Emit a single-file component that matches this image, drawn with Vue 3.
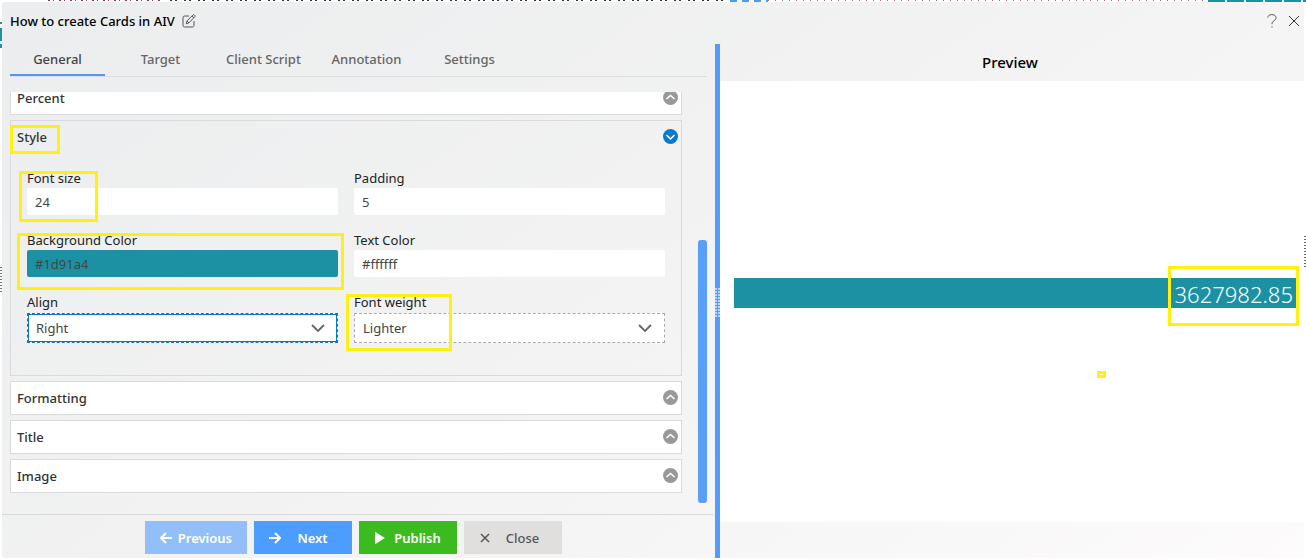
<script setup>
import { ref } from 'vue'

const tabs = ['General', 'Target', 'Client Script', 'Annotation', 'Settings']
const active = ref('General')
const fontSize = ref('24')
const padding = ref('5')
const background = ref('#1d91a4')
const textColor = ref('#ffffff')
const align = ref('Right')
const weight = ref('Lighter')
const closedPanels = ['Formatting', 'Title', 'Image']
</script>

<template>
  <div class="page">
    <div class="backdrop" aria-hidden="true">
      <i class="code-a"></i><i class="code-b"></i><i class="code-c"></i><i class="code-d"></i><i class="code-e"></i>
      <i class="edge-a"></i><i class="edge-b"></i><i class="edge-c"></i>
    </div>
    <div class="dialog">
      <header class="titlebar">
        <h1>How to create Cards in AIV</h1>
        <button class="plain" aria-label="Rename">
          <svg width="14" height="14" viewBox="0 0 14 14" fill="none" stroke="#555" stroke-width="1">
            <path d="M7 2H2.6Q1 2 1 3.6v7.8Q1 13 2.6 13h7.8q1.600 0 1.600-1.600V7" />
            <path d="M4.300 9.800l.7-2.900L11 .9q.6-.5 1.200 0l.6.6q.5.6 0 1.200L6.900 8.900zM10 2l1.900 1.900M5 7l1.900 1.900" />
          </svg>
        </button>
        <span class="grow"></span>
        <button class="plain" aria-label="Help">
          <svg width="10" height="14" viewBox="0 0 10 14" fill="none" stroke="#555" stroke-width="1">
            <path d="M.8 3.500C1 1.600 2.600.6 4.800.6c2.500 0 4.200 1.100 4.200 3.100 0 1.500-.8 2.200-2.100 3.100C5.500 7.800 5 8.400 5 10.200M5 12.300v1.300" />
          </svg>
        </button>
        <button class="plain" aria-label="Close dialog">
          <svg width="12" height="12" viewBox="0 0 12 12" fill="none" stroke="#333" stroke-width="1"><path d="M1 1l10 10M11 1L1 11" /></svg>
        </button>
      </header>

      <div class="body">
        <section class="editor">
          <nav class="tabs" role="tablist">
            <button v-for="t in tabs" :key="t" role="tab" :aria-selected="t === active" :class="{ on: t === active }" @click="active = t">{{ t }}</button>
          </nav>

          <div class="scroller">
            <div class="view">
              <div class="stack">
                <section class="panel">
                  <button class="head"><span>Percent</span>
                    <svg class="toggle" viewBox="0 0 15 15"><circle cx="7.5" cy="7.5" r="7.5" /><path d="M3.500 9l4-3.500 4 3.500" /></svg>
                  </button>
                </section>
                <section class="panel open">
                  <button class="head"><span>Style</span>
                    <svg class="toggle" viewBox="0 0 15 15"><circle cx="7.5" cy="7.5" r="7.5" /><path d="M3.500 6l4 4 4-4" /></svg>
                    <i class="mark mark-style"></i>
                  </button>
                  <div class="fields">
                    <div class="field">
                      <label for="fs">Font size</label>
                      <input id="fs" v-model="fontSize" type="text" />
                      <i class="mark mark-size"></i>
                    </div>
                    <div class="field">
                      <label for="pd">Padding</label>
                      <input id="pd" v-model="padding" type="text" />
                    </div>
                    <div class="field">
                      <label for="bg">Background Color</label>
                      <input id="bg" v-model="background" class="teal" type="text" />
                      <i class="mark mark-bg"></i>
                    </div>
                    <div class="field">
                      <label for="tc">Text Color</label>
                      <input id="tc" v-model="textColor" type="text" />
                    </div>
                    <div class="field">
                      <label for="al">Align</label>
                      <div class="drop focus">
                        <select id="al" v-model="align"><option>Left</option><option>Center</option><option>Right</option></select>
                        <svg viewBox="0 0 16 10"><path d="M2 2l6 6 6-6" /></svg>
                      </div>
                    </div>
                    <div class="field">
                      <label for="fw">Font weight</label>
                      <div class="drop">
                        <select id="fw" v-model="weight"><option>Lighter</option><option>Normal</option><option>Bold</option></select>
                        <svg viewBox="0 0 16 10"><path d="M2 2l6 6 6-6" /></svg>
                      </div>
                      <i class="mark mark-weight"></i>
                    </div>
                  </div>
                </section>
                <section v-for="p in closedPanels" :key="p" class="panel">
                  <button class="head"><span>{{ p }}</span>
                    <svg class="toggle" viewBox="0 0 15 15"><circle cx="7.5" cy="7.5" r="7.5" /><path d="M3.500 9l4-3.500 4 3.500" /></svg>
                  </button>
                </section>
              </div>
            </div>
            <div class="track"><div class="thumb"></div></div>
          </div>

          <footer class="actions">
            <button class="act prev">
              <svg width="12" height="12" viewBox="0 0 12 12"><path d="M12 6H1.500M6 1L1 6l5 5" /></svg><span>Previous</span>
            </button>
            <button class="act next">
              <svg width="12" height="12" viewBox="0 0 12 12"><path d="M0 6h10.500M6 1l5 5-5 5" /></svg><span>Next</span>
            </button>
            <button class="act publish">
              <svg width="12" height="12" viewBox="0 0 12 12"><path class="solid" d="M2 1.500v9l7-4.500z" /></svg><span>Publish</span>
            </button>
            <button class="act close">
              <svg width="12" height="12" viewBox="0 0 12 12"><path d="M2 2l8 8M10 2l-8 8" /></svg><span>Close</span>
            </button>
          </footer>
        </section>

        <div class="splitter" role="separator"><i class="grip"></i></div>

        <section class="preview">
          <h2>Preview</h2>
          <div class="canvas">
            <div class="card">3627982.85<i class="mark mark-value"></i></div>
            <i class="mark speck"></i>
          </div>
          <div class="foot"></div>
        </section>
      </div>
    </div>
  </div>
</template>

<style>
body { margin: 0; overflow: hidden; }
</style>

<style scoped>
* { box-sizing: border-box; }
.page {
  position: relative;
  height: 100vh;
  padding: 2px;
  background: #fff;
  color: #333;
  font: 13px/18px "Noto Sans", "Open Sans", sans-serif;
}
button, input, select { font: inherit; color: inherit; margin: 0; }
button { border: 0; background: none; padding: 0; cursor: pointer; }
h1, h2 { margin: 0; }

.backdrop i { position: absolute; top: 0; height: 1px; }
.backdrop .code-a { left: 48px; width: 115px; background: repeating-linear-gradient(90deg, #8a3654 0 2px, #fff 2px 5px, #8a3654 5px 6px, #fff 6px 11px); }
.backdrop .code-b { left: 170px; width: 554px; background: repeating-linear-gradient(90deg, #333 0 2px, #fff 2px 5px, #333 5px 7px, #fff 7px 14px); }
.backdrop .code-c { left: 730px; width: 38px; height: 2px; background: repeating-linear-gradient(90deg, #4b9bf0 0 7px, #fff 7px 12px); }
.backdrop .code-d { left: 768px; width: 436px; background: repeating-linear-gradient(90deg, #a66c7f 0 1px, #fff 1px 7px); }
.backdrop .code-e { left: 1208px; width: 98px; height: 2px; background: repeating-linear-gradient(90deg, #1d91a4 0 17px, #fff 17px 19px); }
.backdrop .edge-a { left: 0; top: 22px; width: 2px; height: 26px; background: linear-gradient(#1d91a4 0 2px, #fff 2px 6px, #1d91a4 6px 19px, #fff 19px 22px, #1d91a4 22px); }
.backdrop .edge-b { left: 0; top: 267px; width: 2px; height: 25px; background: repeating-linear-gradient(#777 0 1px, #fff 1px 3px); }
.backdrop .edge-c { right: 0; top: 236px; width: 2px; height: 31px; background: repeating-linear-gradient(#666 0 1px, #fff 1px 3px); }

.dialog {
  position: relative;
  display: flex;
  flex-direction: column;
  height: 100%;
  border-radius: 3px;
  background: linear-gradient(145deg, #ebedee 0%, #f2f2f2 45%, #f5f5f5 65%, #fdfbfb 100%);
}
.titlebar { display: flex; align-items: center; height: 42px; padding: 0 4px 5px 8px; }
h1 { font-size: 13px; line-height: 18px; font-weight: 500; color: #000; }
.plain { display: flex; margin-left: 7px; }
.plain + .plain { margin-left: 11px; }
.grow { flex: 1; }

.body { flex: 1; display: flex; min-height: 0; }
.editor { flex: 713 1 0; display: flex; flex-direction: column; min-width: 0; }
.tabs { display: flex; gap: 8px; margin: 0 8px; height: 33px; border-bottom: 1px solid #dcdfe0; flex: none; }
.tabs button { width: 95px; height: 32px; color: #666; font-weight: 500; border-bottom: 2px solid transparent; }
.tabs .on { color: #444; border-color: #5596ee; }

.scroller { flex: 1; display: flex; min-height: 0; margin-top: 15px; padding: 0 8px; }
.view { flex: 1; overflow: hidden; display: flex; flex-direction: column; justify-content: flex-end; padding-bottom: 21px; }
.stack { display: flex; flex-direction: column; gap: 5px; }
.track { width: 25px; display: flex; justify-content: flex-end; align-items: flex-end; padding-bottom: 11px; }
.thumb { width: 9px; height: 263px; border-radius: 3px; background: #5a9efb; }

.panel { border: 1px solid #dadada; background: #fff; }
.panel.open { background: none; }
.head { position: relative; display: flex; justify-content: space-between; align-items: center; width: 100%; height: 32px; padding: 0 3px 0 6px; line-height: 14px; font-weight: 500; text-align: left; }
.toggle { width: 15px; height: 15px; margin-bottom: 2px; fill: #999; }
.open .toggle { fill: #0b78d0; }
.toggle path { fill: none; stroke: #fff; stroke-width: 1.500; }

.fields { display: grid; grid-template-columns: 1fr 1fr; gap: 17px 16px; padding: 17px 16px 32px; }
.field { position: relative; }
label { display: block; height: 18px; line-height: 16px; color: #222; }
input { display: block; width: 100%; height: 27px; border: 0; border-radius: 2px; background: #fff; padding: 0 8px; color: #444; outline: 0; }
input.teal { background: #1d91a4; }
.drop { position: relative; height: 30px; margin-top: 1px; border: 1px dashed #aaa; background: #fff; }
.drop.focus { border-color: #0d78bd; box-shadow: inset 0 0 0 1px #0d78bd; }
select { width: 100%; height: 100%; padding: 0 8px; border: 0; background: none; appearance: none; color: #444; outline: 0; }
.drop svg { position: absolute; right: 11px; top: 9px; width: 16px; height: 10px; fill: none; stroke: #666; stroke-width: 1.800; pointer-events: none; }

.actions { display: flex; justify-content: center; gap: 7px; height: 44px; padding: 6px 10px 0 0; border-top: 1px solid #dadada; border-radius: 0 4px 0 0; flex: none; }
.act { display: flex; align-items: center; width: 98px; height: 33px; padding: 0 8px 0 15px; color: #fff; font-weight: 600; }
.act span { flex: 1; text-align: center; }
.act svg { fill: none; stroke: currentColor; stroke-width: 2; }
.act .solid { fill: currentColor; }
.prev { width: 102px; background: #92bff9; }
.act.prev { padding-right: 15px; }
.prev span { text-align: right; }
.next { background: #4d9cff; }
.publish { background: #3cbb20; }
.close { background: #e0dfde; color: #555; font-weight: 500; }
.close svg { stroke-width: 1.500; }

.splitter { position: relative; width: 5px; background: #529dfb; }
.grip { position: absolute; left: 0; top: 243px; width: 5px; height: 31px; background: repeating-linear-gradient(#529dfb 0 1px, transparent 1px 3px), repeating-linear-gradient(90deg, #b5d3fb 0 2px, #529dfb 2px 3px); }

.preview { flex: 584 1 0; display: flex; flex-direction: column; min-width: 0; }
h2 { height: 37px; padding-right: 4px; font-size: 15px; line-height: 37px; font-weight: 500; color: #000; text-align: center; }
.canvas { position: relative; flex: 1; display: flex; flex-direction: column; justify-content: center; background: #fff; padding: 0 8px 17px 14px; }
.card { position: relative; height: 30px; padding-right: 3px; background: #1d91a4; color: #fff; font-size: 22px; line-height: 32px; font-weight: 300; text-align: right; }
.foot { height: 36px; }

.mark { position: absolute; border: 3px solid #fff012; pointer-events: none; z-index: 2; }
.mark-style { left: -1px; top: 4px; width: 50px; height: 29px; }
.mark-size { left: -8px; top: 1px; width: 79px; height: 51px; }
.mark-bg { left: -10px; right: -6px; top: 1px; height: 57px; }
.mark-weight { left: -8px; top: 0; width: 106px; height: 57px; }
.mark-value { right: -3px; top: -12px; width: 131px; height: 60px; }
.speck { left: 377px; top: 290px; width: 9px; height: 7px; }
</style>
